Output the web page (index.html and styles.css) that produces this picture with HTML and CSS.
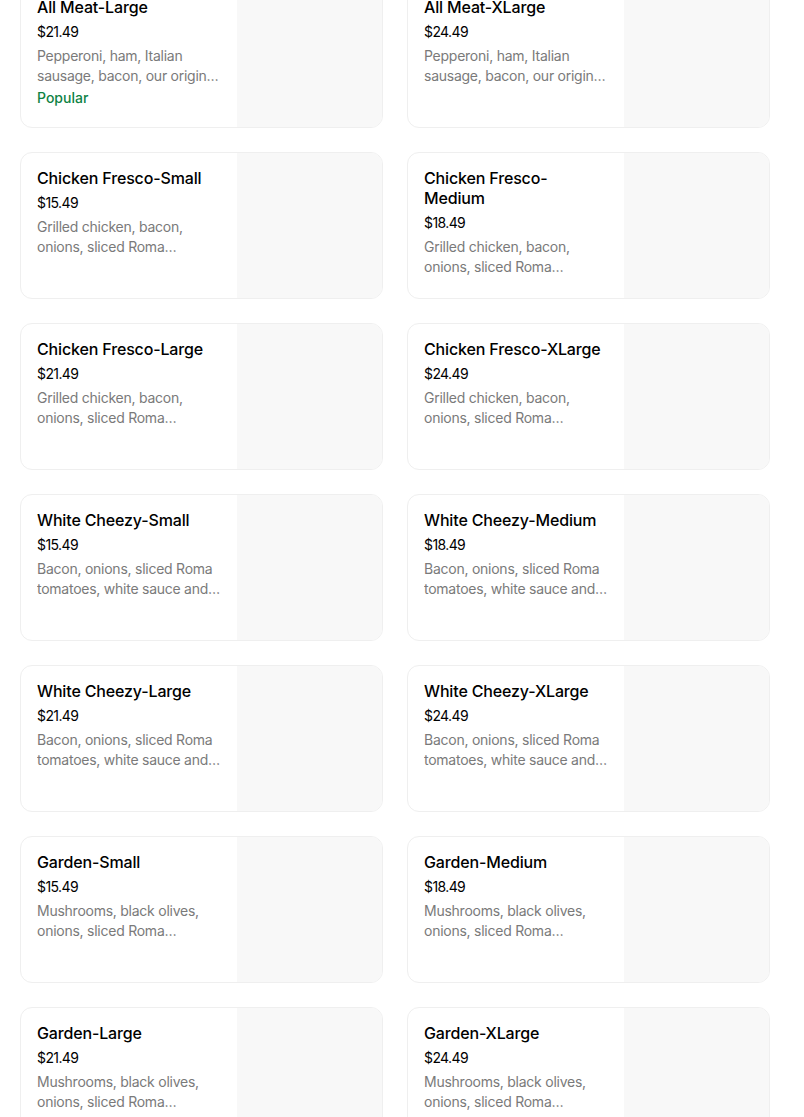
FILE: index.html
```html
<!DOCTYPE html>
<html lang="en">
<head>
<meta charset="utf-8">
<title>Menu</title>
<link rel="stylesheet" href="styles.css">
</head>
<body>
<main class="grid">
  <div class="card"><div class="info"><div class="title">All Meat-Large</div><div class="price">$21.49</div><div class="desc">Pepperoni, ham, Italian sausage, bacon, our original sauce and cheese</div><div class="tag">Popular</div></div><div class="img"></div></div>
  <div class="card"><div class="info"><div class="title">All Meat-XLarge</div><div class="price">$24.49</div><div class="desc">Pepperoni, ham, Italian sausage, bacon, our original sauce and cheese</div></div><div class="img"></div></div>

  <div class="card"><div class="info"><div class="title">Chicken Fresco-Small</div><div class="price">$15.49</div><div class="desc">Grilled chicken, bacon,<br>onions, sliced Roma tomatoes, white sauce</div></div><div class="img"></div></div>
  <div class="card"><div class="info"><div class="title">Chicken Fresco-<br>Medium</div><div class="price">$18.49</div><div class="desc">Grilled chicken, bacon,<br>onions, sliced Roma tomatoes, white sauce</div></div><div class="img"></div></div>

  <div class="card"><div class="info"><div class="title">Chicken Fresco-Large</div><div class="price">$21.49</div><div class="desc">Grilled chicken, bacon,<br>onions, sliced Roma tomatoes, white sauce</div></div><div class="img"></div></div>
  <div class="card"><div class="info"><div class="title">Chicken Fresco-XLarge</div><div class="price">$24.49</div><div class="desc">Grilled chicken, bacon,<br>onions, sliced Roma tomatoes, white sauce</div></div><div class="img"></div></div>

  <div class="card"><div class="info"><div class="title">White Cheezy-Small</div><div class="price">$15.49</div><div class="desc">Bacon, onions, sliced Roma<br>tomatoes, white sauce and cheese</div></div><div class="img"></div></div>
  <div class="card"><div class="info"><div class="title">White Cheezy-Medium</div><div class="price">$18.49</div><div class="desc">Bacon, onions, sliced Roma<br>tomatoes, white sauce and cheese</div></div><div class="img"></div></div>

  <div class="card"><div class="info"><div class="title">White Cheezy-Large</div><div class="price">$21.49</div><div class="desc">Bacon, onions, sliced Roma<br>tomatoes, white sauce and cheese</div></div><div class="img"></div></div>
  <div class="card"><div class="info"><div class="title">White Cheezy-XLarge</div><div class="price">$24.49</div><div class="desc">Bacon, onions, sliced Roma<br>tomatoes, white sauce and cheese</div></div><div class="img"></div></div>

  <div class="card"><div class="info"><div class="title">Garden-Small</div><div class="price">$15.49</div><div class="desc">Mushrooms, black olives,<br>onions, sliced Roma tomatoes, green peppers</div></div><div class="img"></div></div>
  <div class="card"><div class="info"><div class="title">Garden-Medium</div><div class="price">$18.49</div><div class="desc">Mushrooms, black olives,<br>onions, sliced Roma tomatoes, green peppers</div></div><div class="img"></div></div>

  <div class="card"><div class="info"><div class="title">Garden-Large</div><div class="price">$21.49</div><div class="desc">Mushrooms, black olives,<br>onions, sliced Roma tomatoes, green peppers</div></div><div class="img"></div></div>
  <div class="card"><div class="info"><div class="title">Garden-XLarge</div><div class="price">$24.49</div><div class="desc">Mushrooms, black olives,<br>onions, sliced Roma tomatoes, green peppers</div></div><div class="img"></div></div>
</main>
</body>
</html>
```

FILE: styles.css
```css
html, body {
  margin: 0;
  padding: 0;
  background: #ffffff;
}
body {
  font-family: Inter, "Noto Sans", "Liberation Sans", sans-serif;
  color: #000000;
  overflow: hidden;
}
.grid {
  display: grid;
  grid-template-columns: 363px 363px;
  column-gap: 24px;
  row-gap: 24px;
  padding-left: 20px;
  margin-top: -19px;
}
.card {
  box-sizing: border-box;
  height: 147px;
  border: 1px solid #efefef;
  border-radius: 12px;
  overflow: hidden;
  display: flex;
  background: #ffffff;
}
.info {
  flex: 1;
  min-width: 0;
  padding: 15px 16px 0 16px;
}
.img {
  width: 145px;
  flex: none;
  background: #f8f8f8;
}
.title {
  font-size: 16px;
  line-height: 20px;
  font-weight: 500;
  letter-spacing: -0.15px;
  color: #000000;
}
.price {
  margin-top: 5px;
  font-size: 14px;
  line-height: 20px;
  letter-spacing: -0.6px;
  color: #000000;
}
.desc {
  margin-top: 4px;
  font-size: 14px;
  line-height: 20px;
  letter-spacing: -0.25px;
  color: #7a7a7a;
  display: -webkit-box;
  -webkit-line-clamp: 2;
  -webkit-box-orient: vertical;
  overflow: hidden;
}
.tag {
  margin-top: 2px;
  font-size: 14px;
  line-height: 20px;
  font-weight: 500;
  color: #0e8345;
}
```
